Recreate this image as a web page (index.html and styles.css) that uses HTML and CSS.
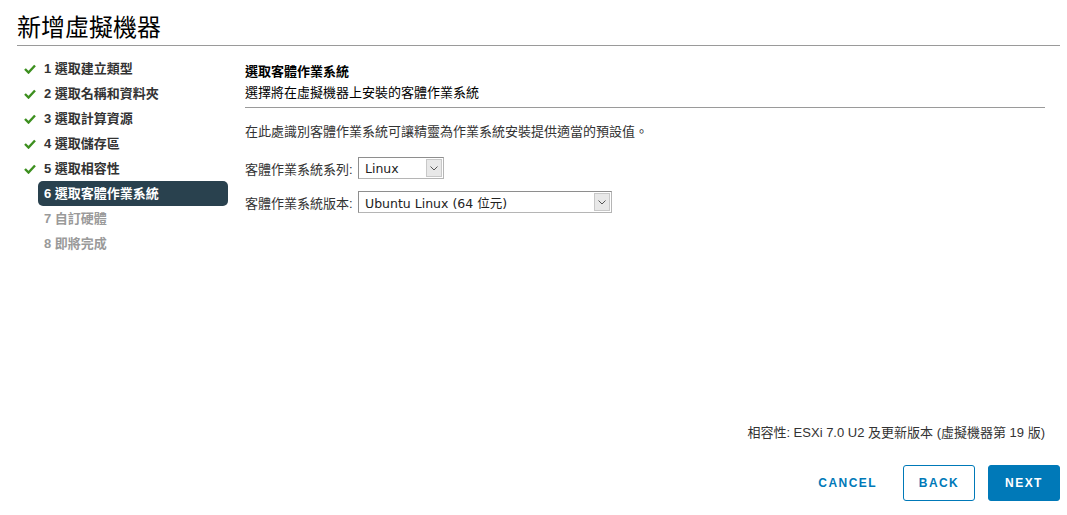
FILE: index.html
```html
<!DOCTYPE html>
<html lang="zh-Hant">
<head>
    <meta charset="UTF-8">
    <title>新增虛擬機器</title>
    <link rel="stylesheet" href="styles.css">
</head>
<body>
    <div class="wizard">
        <h1 class="wizard-title">新增虛擬機器</h1>

        <div class="wizard-body">
            <ul class="steps">
                <li class="step done"><svg class="check" viewBox="0 0 12 10"><polyline points="1,5 4.5,8.5 11,1.5"/></svg><span class="step-label">1 選取建立類型</span></li>
                <li class="step done"><svg class="check" viewBox="0 0 12 10"><polyline points="1,5 4.5,8.5 11,1.5"/></svg><span class="step-label">2 選取名稱和資料夾</span></li>
                <li class="step done"><svg class="check" viewBox="0 0 12 10"><polyline points="1,5 4.5,8.5 11,1.5"/></svg><span class="step-label">3 選取計算資源</span></li>
                <li class="step done"><svg class="check" viewBox="0 0 12 10"><polyline points="1,5 4.5,8.5 11,1.5"/></svg><span class="step-label">4 選取儲存區</span></li>
                <li class="step done"><svg class="check" viewBox="0 0 12 10"><polyline points="1,5 4.5,8.5 11,1.5"/></svg><span class="step-label">5 選取相容性</span></li>
                <li class="step active"><span class="step-label">6 選取客體作業系統</span></li>
                <li class="step todo"><span class="step-label">7 自訂硬體</span></li>
                <li class="step todo"><span class="step-label">8 即將完成</span></li>
            </ul>

            <div class="content">
                <div class="content-head">
                    <h2>選取客體作業系統</h2>
                    <p>選擇將在虛擬機器上安裝的客體作業系統</p>
                </div>

                <p class="intro">在此處識別客體作業系統可讓精靈為作業系統安裝提供適當的預設值。</p>

                <div class="form-row">
                    <label>客體作業系統系列:</label>
                    <div class="select select-small">
                        <span class="select-value">Linux</span>
                        <span class="select-arrow"><svg viewBox="0 0 8 5"><polyline points="0.5,0.5 4,4 7.5,0.5"/></svg></span>
                    </div>
                </div>
                <div class="form-row">
                    <label>客體作業系統版本:</label>
                    <div class="select select-wide">
                        <span class="select-value">Ubuntu Linux (64 位元)</span>
                        <span class="select-arrow"><svg viewBox="0 0 8 5"><polyline points="0.5,0.5 4,4 7.5,0.5"/></svg></span>
                    </div>
                </div>

                <div class="compat">相容性: ESXi 7.0 U2 及更新版本 (虛擬機器第 19 版)</div>
            </div>
        </div>

        <div class="wizard-footer">
            <button class="btn btn-link">CANCEL</button>
            <button class="btn btn-outline">BACK</button>
            <button class="btn btn-primary">NEXT</button>
        </div>
    </div>
</body>
</html>
```

FILE: styles.css
```css
* { box-sizing: border-box; }

body {
    margin: 0;
    font-family: "Liberation Sans", "Noto Sans CJK TC", sans-serif;
    font-size: 13px;
    color: #333;
    background: #fff;
}

.wizard {
    height: 515px;
    padding: 0 7px 0 17px;
    display: flex;
    flex-direction: column;
}

.wizard-title {
    margin: 0;
    padding-top: 12px;
    height: 46px;
    font-size: 24px;
    font-weight: normal;
    line-height: 32px;
    color: #000;
    border-bottom: 1px solid #9a9a9a;
}

.wizard-body {
    display: flex;
    flex: 1;
}

/* Left step list */
.steps {
    list-style: none;
    margin: 10px 0 0;
    padding: 0;
    width: 211px;
}
.step {
    display: flex;
    align-items: center;
    height: 25px;
    padding-left: 21px;
    position: relative;
}
.step-label {
    flex: 1;
    height: 25px;
    line-height: 25px;
    padding-left: 6px;
    font-weight: bold;
    border-radius: 5px;
    white-space: nowrap;
}
.step.done .step-label { color: #333; }
.step.todo .step-label { color: #9a9a9a; }
.step.active .step-label {
    background: #29414e;
    color: #fff;
}
.check {
    position: absolute;
    left: 7px;
    top: 8px;
    width: 12px;
    height: 10px;
    fill: none;
    stroke: #3d8f1f;
    stroke-width: 2.4;
}

/* Right content */
.content {
    flex: 1;
    margin-left: 17px;
    margin-right: 15px;
    display: flex;
    flex-direction: column;
}
.content-head {
    padding-top: 16px;
    padding-bottom: 4px;
    border-bottom: 1px solid #9a9a9a;
}
.content-head h2 {
    margin: 0;
    font-size: 13px;
    font-weight: bold;
    line-height: 20px;
    color: #000;
}
.content-head p {
    margin: 1px 0 0;
    line-height: 20px;
    color: #000;
}
.intro {
    margin: 14px 0 15px;
    line-height: 20px;
}

.form-row {
    display: flex;
    align-items: center;
    height: 22px;
    margin-bottom: 12px;
}
.form-row label {
    width: 113px;
    white-space: nowrap;
}
.select {
    display: flex;
    align-items: center;
    height: 22px;
    border: 1px solid #b5b5b5;
    border-top-color: #8e8e8e;
    border-left-color: #8e8e8e;
    background: #fff;
    padding: 1px;
}
.select-small { width: 86px; }
.select-wide { width: 254px; }
.select-value {
    flex: 1;
    padding-left: 5px;
    font-family: "DejaVu Sans", "Noto Sans CJK TC", sans-serif;
    font-size: 12.5px;
    color: #222;
    white-space: nowrap;
}
.select-arrow {
    width: 16px;
    height: 18px;
    background: #e8e8e8;
    border: 1px solid #c8c8c8;
    display: flex;
    align-items: center;
    justify-content: center;
}
.select-arrow svg {
    width: 8px;
    height: 5px;
    fill: none;
    stroke: #555;
    stroke-width: 1;
}

.compat {
    margin-top: auto;
    margin-bottom: 1px;
    text-align: right;
    line-height: 20px;
}

/* Footer buttons */
.wizard-footer {
    display: flex;
    justify-content: flex-end;
    gap: 13px;
    padding: 21px 0 14px;
}
.btn {
    height: 36px;
    min-width: 72px;
    padding: 0 12px;
    font-family: "Liberation Sans", sans-serif;
    font-size: 12px;
    font-weight: bold;
    letter-spacing: 0.12em;
    border-radius: 3px;
    border: 1px solid transparent;
    background: transparent;
    cursor: pointer;
}
.btn-link { color: #0079b8; }
.btn-outline {
    color: #0079b8;
    border-color: #0079b8;
}
.btn-primary {
    color: #fff;
    background: #0079b8;
    border-color: #0079b8;
}
```
